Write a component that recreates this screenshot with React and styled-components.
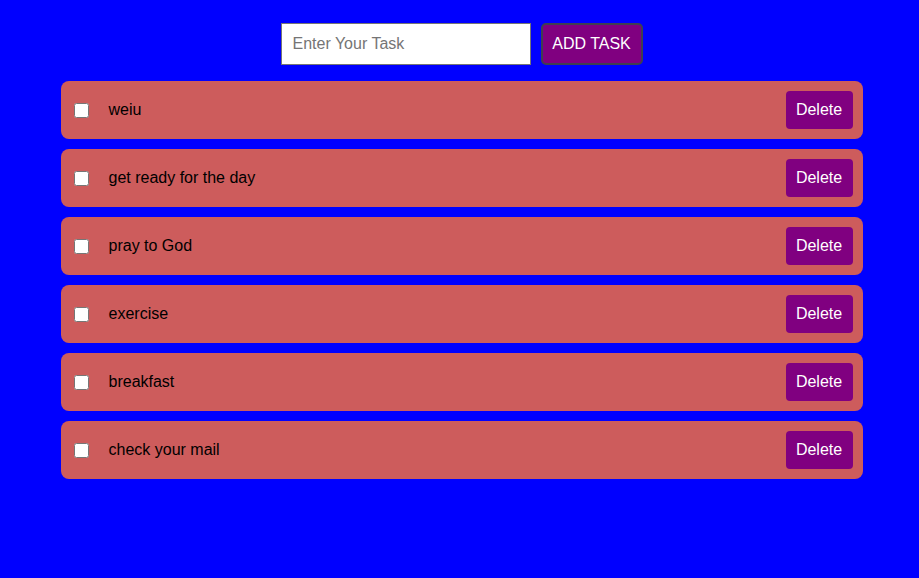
import React, { useState } from "react";
import styled, { createGlobalStyle } from "styled-components";

const Global = createGlobalStyle`
  html, body { background: #0000ff; }
  body {
    margin: 8px 6px 8px 10px;
    font-family: "Liberation Sans", Arial, sans-serif;
  }
`;

const Page = styled.div`
  display: flex;
  flex-direction: column;
  align-items: center;
`;

const Form = styled.form`
  display: flex;
  gap: 10px;
  margin-top: 15px;
  margin-bottom: 16px;
`;

const Input = styled.input`
  box-sizing: border-box;
  width: 250px;
  height: 42px;
  padding: 0 11px;
  border: 1px solid #767676;
  font-family: "Liberation Sans", Arial, sans-serif;
  font-size: 16px;
  outline: none;
  &::placeholder { color: #757575; }
`;

const AddButton = styled.button`
  box-sizing: border-box;
  width: 102px;
  height: 42px;
  background: #800080;
  color: #fff;
  border: 2px solid #3f3f50;
  border-radius: 5px;
  font-family: "Liberation Sans", Arial, sans-serif;
  font-size: 16px;
  padding: 0;
`;

const List = styled.ul`
  list-style: none;
  margin: 0;
  padding: 0;
  width: 802px;
  display: flex;
  flex-direction: column;
  gap: 10px;
`;

const Item = styled.li`
  box-sizing: border-box;
  height: 58px;
  background: #cd5c5c;
  border-radius: 8px;
  padding: 10px;
  display: flex;
  align-items: center;
`;

const Check = styled.input`
  width: 15px;
  height: 15px;
  margin: 0 20px 0 3px;
`;

const Label = styled.span`
  flex: 1;
  font-size: 16px;
  color: #000;
`;

const DeleteButton = styled.button`
  box-sizing: border-box;
  height: 38px;
  width: 67px;
  padding: 0;
  background: #800080;
  color: #fff;
  border: none;
  border-radius: 4px;
  font-family: "Liberation Sans", Arial, sans-serif;
  font-size: 16px;
`;

const initial = [
  "weiu",
  "get ready for the day",
  "pray to God",
  "exercise",
  "breakfast",
  "check your mail",
];

export default function App() {
  const [tasks, setTasks] = useState(initial);
  const [text, setText] = useState("");
  return (
    <Page>
      <Global />
      <Form
        onSubmit={(e) => {
          e.preventDefault();
          if (text.trim()) {
            setTasks([...tasks, text.trim()]);
            setText("");
          }
        }}
      >
        <Input
          placeholder="Enter Your Task"
          value={text}
          onChange={(e) => setText(e.target.value)}
        />
        <AddButton type="submit">ADD TASK</AddButton>
      </Form>
      <List>
        {tasks.map((t, i) => (
          <Item key={i}>
            <Check type="checkbox" />
            <Label>{t}</Label>
            <DeleteButton onClick={() => setTasks(tasks.filter((_, j) => j !== i))}>
              Delete
            </DeleteButton>
          </Item>
        ))}
      </List>
    </Page>
  );
}
